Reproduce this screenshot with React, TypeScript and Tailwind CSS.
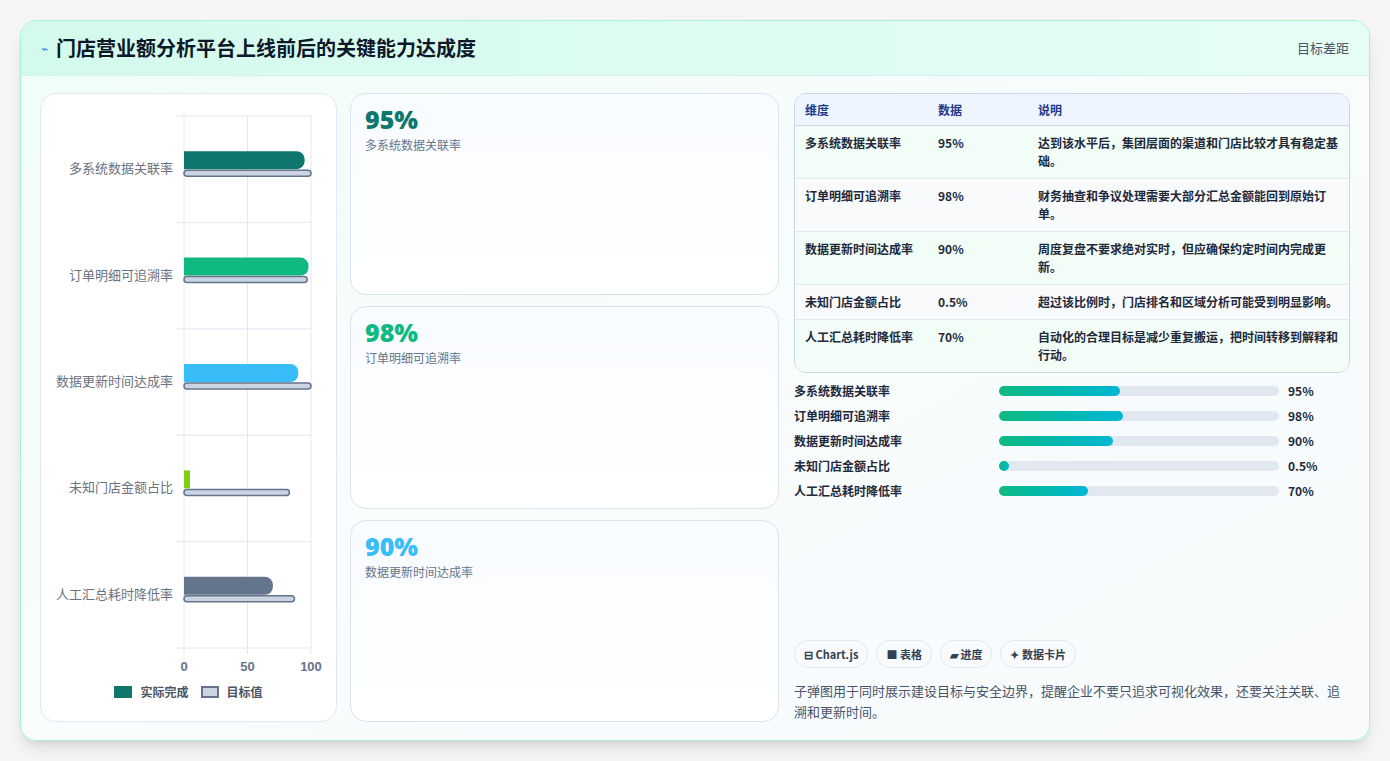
const rows = [
  { name: "多系统数据关联率", v: 95, t: 100, color: "#0f766e", val: "95%", note: "达到该水平后，集团层面的渠道和门店比较才具有稳定基础。", w: 121 },
  { name: "订单明细可追溯率", v: 98, t: 97, color: "#10b981", val: "98%", note: "财务抽查和争议处理需要大部分汇总金额能回到原始订单。", w: 124 },
  { name: "数据更新时间达成率", v: 90, t: 100, color: "#38bdf8", val: "90%", note: "周度复盘不要求绝对实时，但应确保约定时间内完成更新。", w: 114 },
  { name: "未知门店金额占比", v: 5, t: 83, color: "#84cc16", val: "0.5%", note: "超过该比例时，门店排名和区域分析可能受到明显影响。", w: 10 },
  { name: "人工汇总耗时降低率", v: 70, t: 87, color: "#64748b", val: "70%", note: "自动化的合理目标是减少重复搬运，把时间转移到解释和行动。", w: 89 },
];

const font = { fontFamily: '"Noto Sans CJK SC", "Noto Sans", sans-serif' };

function Chart() {
  // plot coords relative to panel (panel at 40,93)
  const x0 = 143, sc = 1.27, top = 22, rowH = 106.4;
  return (
    <svg width="296" height="580" className="block">
      {[0, 50, 100].map((g) => (
        <line key={g} x1={x0 + g * sc} x2={x0 + g * sc} y1={top} y2={top + rowH * 5 + 6} stroke="#e2e8f0" />
      ))}
      {[0, 1, 2, 3, 4, 5].map((i) => (
        <line key={i} x1={135} x2={x0 + 127} y1={top + i * rowH} y2={top + i * rowH} stroke="#e2e8f0" />
      ))}
      {rows.map((r, i) => {
        const cy = top + i * rowH + rowH / 2 - 2;
        return (
          <g key={r.name}>
            <text x={132} y={cy + 6} textAnchor="end" fontSize="13" fill="#6b7280" style={font}>{r.name}</text>
            {r.v < 10 ? (
              <rect x={x0} y={cy - 16} width={6} height={18} fill={r.color} />
            ) : (
              <path d={`M${x0} ${cy - 16} H${x0 + r.v * sc - 8} a8 8 0 0 1 8 8 v2 a8 8 0 0 1 -8 8 H${x0} Z`} fill={r.color} />
            )}
            <rect x={x0} y={cy + 3} width={r.t * sc} height={6} rx={3} fill="#cbd5e1" stroke="#64748b" strokeWidth="1.5" />
          </g>
        );
      })}
      {[0, 50, 100].map((g) => (
        <text key={g} x={x0 + g * sc} y={577} textAnchor="middle" fontSize="13" fontWeight="700" fill="#64748b" style={{ fontFamily: '"Liberation Sans", sans-serif' }}>{g}</text>
      ))}
    </svg>
  );
}

export default function App() {
  return (
    <div className="w-[1390px] h-[761px] bg-[#f5f5f5] p-5" style={font}>
      <div className="h-[721px] rounded-2xl border border-[#a7f3d0] bg-gradient-to-br from-[#f0fdf7] via-[#f8fcfd] to-[#f8fafc] shadow-lg overflow-hidden flex flex-col">
        <div className="h-[55px] shrink-0 flex items-center justify-between px-5 bg-gradient-to-r from-[#d3faec] to-[#e6fdf6] border-b border-[#d1f5e9]">
          <div className="flex items-center gap-2">
            <span className="text-[#3b82f6] text-xs">⌁</span>
            <h1 className="text-[20px] font-bold text-[#0f172a]">门店营业额分析平台上线前后的关键能力达成度</h1>
          </div>
          <span className="text-[13px] text-[#475569]">目标差距</span>
        </div>
        <div className="flex gap-[13px] px-[19px] pt-[17px] pb-[18px] flex-1 min-h-0">
          <div className="w-[297px] shrink-0 rounded-2xl border border-[#e2e8f0] bg-white flex flex-col">
            <Chart />
            <div className="flex items-center justify-center gap-2 mt-[9px] text-[12px] font-semibold text-[#4b5563]">
              <span className="w-[18px] h-[12px] bg-[#0f766e]" />
              <span>实际完成</span>
              <span className="w-[18px] h-[12px] bg-[#cbd5e1] border-2 border-[#64748b] ml-1" />
              <span>目标值</span>
            </div>
          </div>
          <div className="w-[429px] shrink-0 flex flex-col gap-[11px]">
            {rows.slice(0, 3).map((r) => (
              <div key={r.name} className="flex-1 rounded-2xl border border-[#dbe4ee] bg-gradient-to-b from-[#f8fbff] to-white px-[14px] pt-[9px]">
                <div className="text-[25px] font-extrabold leading-[32px]" style={{ color: r.color, fontFamily: '"Open Sans", sans-serif' }}>{r.val}</div>
                <div className="text-[12px] text-[#64748b] mt-[1px]">{r.name}</div>
              </div>
            ))}
          </div>
          <div className="flex-1 flex flex-col ml-[2px]">
            <div className="rounded-xl border border-[#cbd5e1] overflow-hidden text-[12px] font-semibold text-[#1e293b]">
              <div className="flex h-[32px] items-center bg-[#eef5ff] border-b border-[#cbd5e1] text-[#1e3a8a]">
                <div className="w-[143px] pl-[10px]">维度</div>
                <div className="w-[100px]">数据</div>
                <div className="flex-1">说明</div>
              </div>
              {rows.map((r, i) => (
                <div key={r.name} className={`flex py-[8px] leading-[18px] ${i < 4 ? "border-b border-[#e2e8f0]" : ""} ${i % 2 === 0 ? "bg-[#f2fdf7]" : "bg-[#f8fafc]"}`}>
                  <div className="w-[143px] pl-[10px]">{r.name}</div>
                  <div className="w-[100px]">{r.val}</div>
                  <div className="flex-1 pr-[10px]">{r.note}</div>
                </div>
              ))}
            </div>
            <div className="mt-[9px] flex flex-col gap-[7px]">
              {rows.map((r) => (
                <div key={r.name} className="flex items-center h-[18px] text-[12px] font-semibold text-[#1e293b]">
                  <div className="w-[205px]">{r.name}</div>
                  <div className="w-[280px] h-[10px] rounded-full bg-[#e2e8f0]">
                    <div className="h-full rounded-full bg-gradient-to-r from-[#10b981] to-[#06b6d4]" style={{ width: r.w }} />
                  </div>
                  <div className="ml-[9px]">{r.val}</div>
                </div>
              ))}
            </div>
            <div className="mt-auto flex gap-2 text-[11px] font-bold text-[#334155]">
              {["⊟ Chart.js", "■ 表格", "▰ 进度", "✦ 数据卡片"].map((t) => (
                <span key={t} className="rounded-full border border-[#e2e8f0] bg-[#f8fafc] px-[9px] h-[28px] flex items-center">{t}</span>
              ))}
            </div>
            <p className="mt-[12px] text-[13px] leading-[21px] text-[#475569]">子弹图用于同时展示建设目标与安全边界，提醒企业不要只追求可视化效果，还要关注关联、追溯和更新时间。</p>
          </div>
        </div>
      </div>
    </div>
  );
}
